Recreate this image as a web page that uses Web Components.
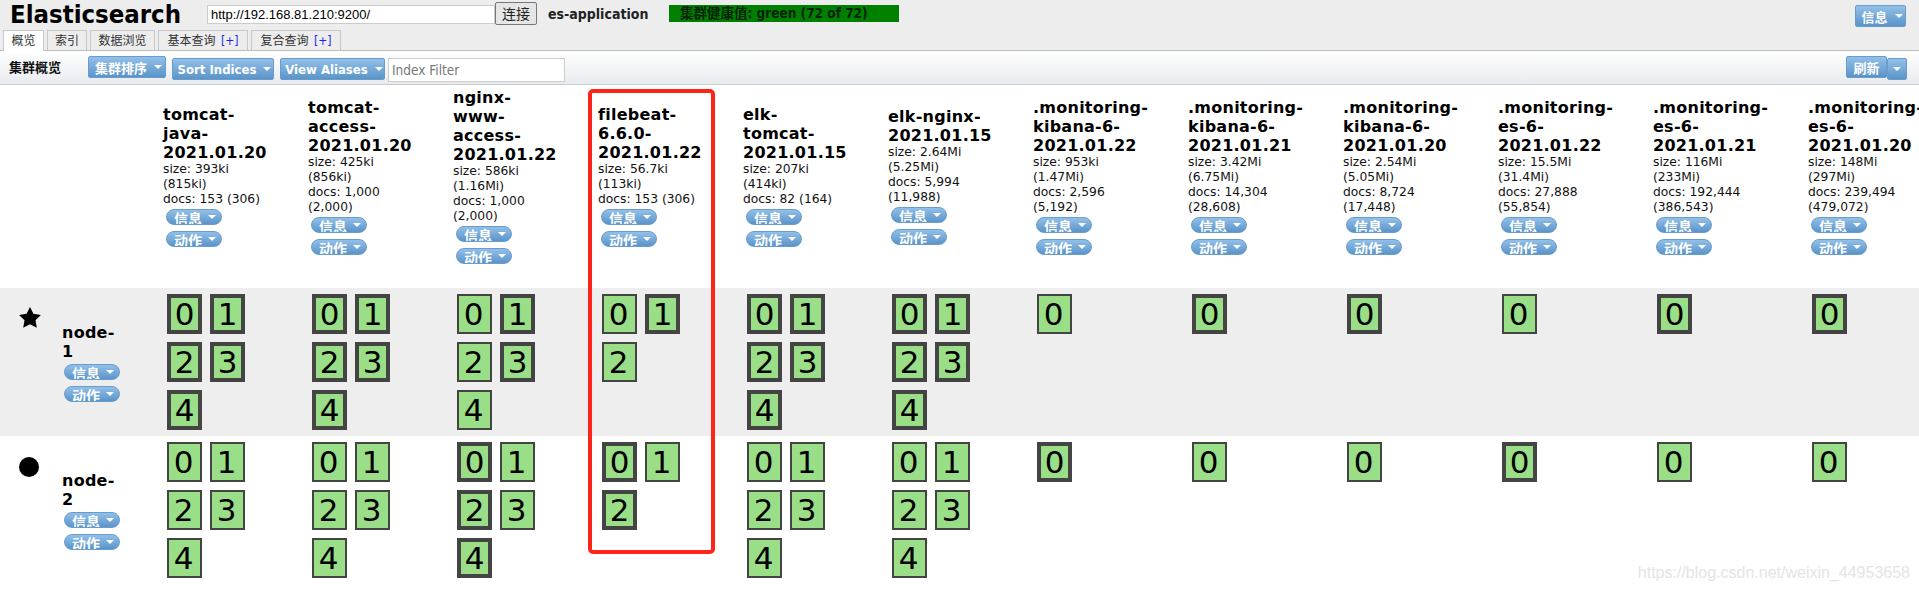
<!DOCTYPE html>
<html>
<head>
<meta charset="utf-8">
<title>Elasticsearch</title>
<style>
	html, body { margin: 0; padding: 0; height: 590px; overflow: hidden; background: #fff; }
	body { font-family: "DejaVu Sans Condensed", "DejaVu Sans", "Noto Sans CJK SC", sans-serif; position: relative; }
</style>
</head>
<body>
<es-topbar></es-topbar>
<es-toolbar></es-toolbar>
<es-overview></es-overview>
<mark-box></mark-box>
<water-mark>https://blog.csdn.net/weixin_44953658</water-mark>

<script>
const SANS = `"DejaVu Sans Condensed", "DejaVu Sans", "Noto Sans CJK SC", sans-serif`
const WIDE = `"DejaVu Sans", "Noto Sans CJK SC", sans-serif`

class EsButton extends HTMLElement {
	constructor(){
		super();
		this.shadowDOM = this.attachShadow({ mode: 'open' })
	}
	connectedCallback(){
		const caret = this.hasAttribute('nocaret') ? '' : '<i></i>'
		this.shadowDOM.innerHTML = `
			<style>
				:host {
					display: inline-flex;
					box-sizing: border-box;
					height: 22px;
					align-items: center;
					justify-content: center;
					gap: 7px;
					padding-left: 3px;
					color: #fff;
					font: bold 13px ${SANS};
					background: linear-gradient(#92c0e9, #5b94c9);
					border: 1px solid #6a9ccb;
					border-radius: 2px;
					overflow: hidden;
					white-space: nowrap;
				}
				:host([nocaret]) { padding-left: 0; }
				:host([pill]) {
					width: 56px;
					height: 16px;
					border-radius: 8px;
					align-items: flex-start;
					justify-content: flex-start;
					padding-left: 7px;
					gap: 6px;
					font-size: 14px;
					line-height: 19px;
				}
				i {
					display: block;
					width: 0;
					height: 0;
					border: 4px solid transparent;
					border-bottom-width: 0;
					border-top-color: #fff;
				}
				:host([pill]) i { margin-top: 5px; }
			</style>
			<slot></slot>${caret}
		`
	}
}

class EsTab extends HTMLElement {
	constructor(){
		super();
		this.shadowDOM = this.attachShadow({ mode: 'open' })
	}
	connectedCallback(){
		this.shadowDOM.innerHTML = `
			<style>
				:host {
					display: block;
					box-sizing: border-box;
					height: 20px;
					padding: 0 8px;
					text-align: center;
					font: 12px/21px ${SANS};
					color: #333;
					background: #ededed;
					border: 1px solid #c8c8c8;
					border-bottom: 0;
				}
				:host([active]) {
					background: #fff;
					height: 21px;
				}
			</style>
			<slot></slot>
		`
	}
}

class EsTopbar extends HTMLElement {
	constructor(){
		super();
		this.shadowDOM = this.attachShadow({ mode: 'open' })
	}
	connectedCallback(){
		this.shadowDOM.innerHTML = `
			<style>
				:host {
					display: block;
					box-sizing: border-box;
					height: 51px;
					background: #ededed;
					border-bottom: 1px solid #bdbdbd;
					font-family: ${SANS};
				}
				.top {
					display: flex;
					align-items: flex-start;
					height: 30px;
				}
				h1 {
					width: 197px;
					margin: 0 0 0 10px;
					font: bold 25.5px/29px ${SANS};
					color: #000;
				}
				input {
					box-sizing: border-box;
					width: 288px;
					height: 19px;
					margin: 5px 0 0;
					padding: 0 3px;
					border: 1px solid #ccc;
					background: #fff;
					font: 13px "Liberation Sans", sans-serif;
					color: #000;
				}
				.go {
					box-sizing: border-box;
					width: 42px;
					height: 23px;
					margin: 2px 0 0;
					text-align: center;
					font: 14px/22px ${SANS};
					color: #222;
					background: #e6e6e6;
					border: 1px solid #777;
					border-radius: 2px;
				}
				.name {
					width: 121px;
					margin-left: 11px;
					font: bold 14px/29px ${SANS};
					color: #222;
				}
				.health {
					box-sizing: border-box;
					width: 230px;
					height: 17px;
					margin-top: 5px;
					padding-left: 11px;
					background: #008000;
					font: bold 13.5px/17px ${SANS};
					color: #042204;
				}
				es-button {
					margin: 5px 13px 0 auto;
					width: 51px;
				}
				.tabs {
					display: flex;
					gap: 3px;
					padding-left: 3px;
				}
				.tabs b {
					font-weight: normal;
					color: #1d1df0;
					margin-left: 2px;
				}
			</style>
			<div class="top">
				<h1>Elasticsearch</h1>
				<input value="http://192.168.81.210:9200/">
				<div class="go">连接</div>
				<div class="name">es-application</div>
				<div class="health">集群健康值: green (72 of 72)</div>
				<es-button>信息</es-button>
			</div>
			<div class="tabs">
				<es-tab active style="width:41px;padding:0">概览</es-tab>
				<es-tab style="width:40px;padding:0">索引</es-tab>
				<es-tab style="width:65px;padding:0">数据浏览</es-tab>
				<es-tab style="width:90px;padding:0">基本查询 <b>[+]</b></es-tab>
				<es-tab style="width:90px;padding:0">复合查询 <b>[+]</b></es-tab>
			</div>
		`
	}
}

class EsToolbar extends HTMLElement {
	constructor(){
		super();
		this.shadowDOM = this.attachShadow({ mode: 'open' })
	}
	connectedCallback(){
		this.shadowDOM.innerHTML = `
			<style>
				:host {
					display: flex;
					box-sizing: border-box;
					height: 34px;
					align-items: flex-start;
					background: linear-gradient(#fff, #e8ebef);
					border-bottom: 1px solid #ccc;
				}
				.label {
					width: 79px;
					margin-left: 9px;
					font: bold 13px/34px ${SANS};
					color: #111;
				}
				es-button { margin-top: 7px; }
				.up { margin-top: 5px; }
				input {
					box-sizing: border-box;
					width: 177px;
					height: 24px;
					margin: 7px 0 0 3px;
					padding: 0 3px;
					border: 1px solid #ccc;
					background: #fff;
					font: 13.5px ${SANS};
				}
				input::placeholder { color: #777; }
				.refresh { margin: 5px 0 0 auto; width: 41px; }
				.more { margin: 7px 12px 0 0; width: 20px; padding-left: 0; }
			</style>
			<div class="label">集群概览</div>
			<es-button class="up" style="width:78px">集群排序</es-button>
			<es-button style="width:102px;margin-left:6px">Sort Indices</es-button>
			<es-button style="width:105px;margin-left:6px">View Aliases</es-button>
			<input placeholder="Index Filter">
			<es-button class="refresh" nocaret>刷新</es-button>
			<es-button class="more"></es-button>
		`
	}
}

class IndexHead extends HTMLElement {
	constructor(){
		super();
		this.shadowDOM = this.attachShadow({ mode: 'open' })
	}
	connectedCallback(){
		this.shadowDOM.innerHTML = `
			<style>
				:host {
					display: flex;
					flex-direction: column;
					justify-content: center;
					box-sizing: border-box;
					height: 203px;
					padding-bottom: 21px;
				}
				.box { width: 106px; }
				:host([wide]) .box { width: 118px; }
				h3 {
					margin: 0;
					font: bold 16px/19px ${WIDE};
					letter-spacing: .25px;
					color: #000;
				}
				p {
					margin: 0;
					max-width: 110px;
					font: 12.3px/15px ${WIDE};
					color: #111;
				}
				es-button { display: flex; margin: 2px 0 0 3px; }
				es-button + es-button { margin-top: 6px; }
			</style>
			<div class="box">
				<h3>${this.getAttribute('name')}</h3>
				<p>size: ${this.getAttribute('size')}</p>
				<p>docs: ${this.getAttribute('docs')}</p>
				<es-button pill>信息</es-button>
				<es-button pill>动作</es-button>
			</div>
		`
	}
}

class NodeHead extends HTMLElement {
	constructor(){
		super();
		this.shadowDOM = this.attachShadow({ mode: 'open' })
	}
	connectedCallback(){
		const master = this.hasAttribute('master')
		const icon = master
			? `<svg width="22" height="21" viewBox="0 0 22 21"><path d="M11 0L14.4 6.8 21.9 7.9 16.5 13.3 17.8 20.8 11 17.3 4.2 20.8 5.5 13.3 .1 7.9 7.6 6.8z"/></svg>`
			: `<svg width="20" height="20" viewBox="0 0 20 20"><circle cx="10" cy="10" r="10"/></svg>`
		this.shadowDOM.innerHTML = `
			<style>
				:host {
					display: flex;
					align-items: center;
					box-sizing: border-box;
					padding-left: 19px;
				}
				.icon { width: 43px; align-self: flex-start; margin-top: ${master ? 19 : 21}px; }
				svg { display: block; }
				.box { width: 62px; }
				h3 {
					margin: 0;
					width: 58px;
					font: bold 16px/19px ${WIDE};
					letter-spacing: .25px;
					color: #000;
				}
				es-button { display: flex; margin: 3px 0 0 2px; }
				es-button + es-button { margin-top: 6px; }
			</style>
			<div class="icon">${icon}</div>
			<div class="box">
				<h3>${this.getAttribute('name')}</h3>
				<es-button pill>信息</es-button>
				<es-button pill>动作</es-button>
			</div>
		`
	}
}

class ShardBox extends HTMLElement {
	constructor(){
		super();
		this.shadowDOM = this.attachShadow({ mode: 'open' })
	}
	connectedCallback(){
		this.shadowDOM.innerHTML = `
			<style>
				:host {
					display: block;
					box-sizing: border-box;
					width: 35px;
					height: 40px;
					background: #9ade87;
					border: 2px solid #444;
					color: #000;
					font: 31px/36px ${WIDE};
					text-align: center;
					padding-right: 2px;
				}
				:host([primary]) {
					border-width: 4px;
					line-height: 32px;
					padding-right: 0;
				}
			</style>
			<slot></slot>
		`
	}
}

class ShardCell extends HTMLElement {
	constructor(){
		super();
		this.shadowDOM = this.attachShadow({ mode: 'open' })
	}
	connectedCallback(){
		this.shadowDOM.innerHTML = `
			<style>
				:host {
					display: flex;
					flex-wrap: wrap;
					align-content: flex-start;
					gap: 8px;
					box-sizing: border-box;
					padding: 6px 0 6px 4px;
					width: 90px;
				}
			</style>
			<slot></slot>
		`
	}
}

class GridRow extends HTMLElement {
	constructor(){
		super();
		this.shadowDOM = this.attachShadow({ mode: 'open' })
	}
	connectedCallback(){
		this.shadowDOM.innerHTML = `
			<style>
				:host {
					display: grid;
					grid-template-columns: 163px repeat(6, 145px) repeat(6, 155px);
					width: 1963px;
				}
				:host([shaded]) { background: #eee; }
			</style>
			<slot></slot>
		`
	}
}

const INDICES = [
	{ name: 'tomcat-java-2021.01.20', size: '393ki (815ki)', docs: '153 (306)', r1: 'PPPPP', r2: 'rrrrr' },
	{ name: 'tomcat-access-2021.01.20', size: '425ki (856ki)', docs: '1,000 (2,000)', r1: 'PPPPP', r2: 'rrrrr' },
	{ name: 'nginx-www-access-2021.01.22', size: '586ki (1.16Mi)', docs: '1,000 (2,000)', r1: 'rPrPr', r2: 'PrPrP' },
	{ name: 'filebeat-6.6.0-2021.01.22', size: '56.7ki (113ki)', docs: '153 (306)', r1: 'rPr', r2: 'PrP' },
	{ name: 'elk-tomcat-2021.01.15', size: '207ki (414ki)', docs: '82 (164)', r1: 'PPPPP', r2: 'rrrrr' },
	{ name: 'elk-nginx-2021.01.15', size: '2.64Mi (5.25Mi)', docs: '5,994 (11,988)', r1: 'PPPPP', r2: 'rrrrr' },
	{ name: '.monitoring-kibana-6-2021.01.22', size: '953ki (1.47Mi)', docs: '2,596 (5,192)', r1: 'r', r2: 'P', wide: 1 },
	{ name: '.monitoring-kibana-6-2021.01.21', size: '3.42Mi (6.75Mi)', docs: '14,304 (28,608)', r1: 'P', r2: 'r', wide: 1 },
	{ name: '.monitoring-kibana-6-2021.01.20', size: '2.54Mi (5.05Mi)', docs: '8,724 (17,448)', r1: 'P', r2: 'r', wide: 1 },
	{ name: '.monitoring-es-6-2021.01.22', size: '15.5Mi (31.4Mi)', docs: '27,888 (55,854)', r1: 'r', r2: 'P', wide: 1 },
	{ name: '.monitoring-es-6-2021.01.21', size: '116Mi (233Mi)', docs: '192,444 (386,543)', r1: 'P', r2: 'r', wide: 1 },
	{ name: '.monitoring-es-6-2021.01.20', size: '148Mi (297Mi)', docs: '239,494 (479,072)', r1: 'P', r2: 'r', wide: 1 }
]

class EsOverview extends HTMLElement {
	constructor(){
		super();
		this.shadowDOM = this.attachShadow({ mode: 'open' })
	}
	cells(key){
		return INDICES.map(ix => {
			const boxes = [...ix[key]].map((t, i) => `<shard-box ${t === 'P' ? 'primary' : ''}>${i}</shard-box>`).join('')
			return `<shard-cell>${boxes}</shard-cell>`
		}).join('')
	}
	connectedCallback(){
		const heads = INDICES.map(ix =>
			`<index-head name="${ix.name}" size="${ix.size}" docs="${ix.docs}" ${ix.wide ? 'wide' : ''}></index-head>`
		).join('')
		this.shadowDOM.innerHTML = `
			<style>
				:host { display: block; width: 1919px; overflow: hidden; }
			</style>
			<grid-row><div></div>${heads}</grid-row>
			<grid-row shaded><node-head master name="node-1"></node-head>${this.cells('r1')}</grid-row>
			<grid-row><node-head name="node-2"></node-head>${this.cells('r2')}</grid-row>
		`
	}
}

class MarkBox extends HTMLElement {
	constructor(){
		super();
		this.attachShadow({ mode: 'open' }).innerHTML = `
			<style>
				:host {
					position: absolute;
					left: 588px;
					top: 89px;
					width: 127px;
					height: 465px;
					box-sizing: border-box;
					border: 4px solid #ff2419;
					border-radius: 5px;
					pointer-events: none;
				}
			</style>
		`
	}
}

class WaterMark extends HTMLElement {
	constructor(){
		super();
		this.attachShadow({ mode: 'open' }).innerHTML = `
			<style>
				:host {
					position: absolute;
					right: 9px;
					top: 564px;
					font: 16px/18px "Liberation Sans", sans-serif;
					color: #e4e4e4;
				}
			</style>
			<slot></slot>
		`
	}
}

customElements.define('es-button', EsButton)
customElements.define('es-tab', EsTab)
customElements.define('es-topbar', EsTopbar)
customElements.define('es-toolbar', EsToolbar)
customElements.define('index-head', IndexHead)
customElements.define('node-head', NodeHead)
customElements.define('shard-box', ShardBox)
customElements.define('shard-cell', ShardCell)
customElements.define('grid-row', GridRow)
customElements.define('es-overview', EsOverview)
customElements.define('mark-box', MarkBox)
customElements.define('water-mark', WaterMark)
</script>
</body>
</html>
